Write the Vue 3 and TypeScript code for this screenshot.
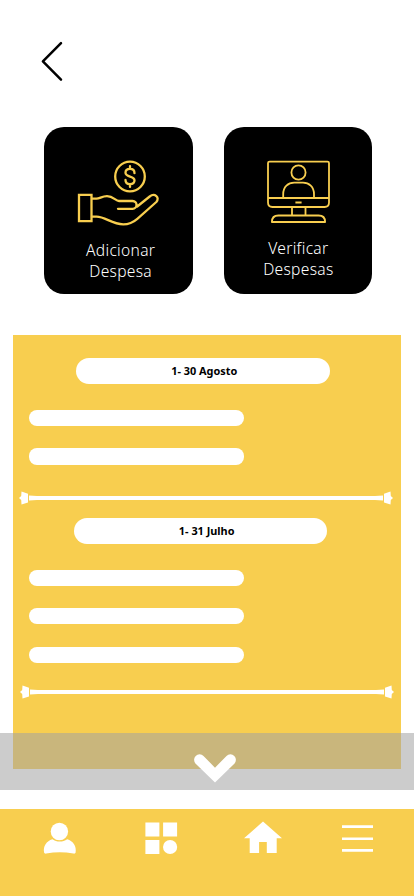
<script setup lang="ts">
interface Period {
  id: string
  label: string
  entries: number
}

const periods: Period[] = [
  { id: 'agosto', label: '1- 30 Agosto', entries: 2 },
  { id: 'julho', label: '1- 31 Julho', entries: 3 },
]
</script>

<template>
  <main class="screen">
    <header class="top">
      <button class="back" aria-label="Voltar">
        <svg width="26" height="42" viewBox="0 0 26 42">
          <path d="M21 2.200 2.900 20.400 21 38.600" fill="none" stroke="#000" stroke-width="2.500" stroke-linecap="round" stroke-linejoin="round" />
        </svg>
      </button>
    </header>

    <section class="actions">
      <button class="card add">
        <svg class="art" width="148" height="110" viewBox="45 127 148 110" fill="none" stroke="#f8ce4f" stroke-width="2.300" stroke-linecap="round" stroke-linejoin="round">
          <circle cx="130" cy="176.500" r="14.800" />
          <path d="M134.500 173.200c0-2.800-1.800-4.300-4.500-4.300s-4.500 1.500-4.500 3.900c0 4.800 9 2.700 9 7.500 0 2.400-1.800 3.900-4.500 3.900s-4.500-1.500-4.500-4.200M130 166.200v2.500M130 184.400v2.500" />
          <path d="M79 194.900h12.500v26.200H79z" stroke-linejoin="miter" />
          <path d="M92 198.700h4.500c3.200 0 5.500-2.500 10.500-2.500 6.500 0 8.500 4.800 12 4.800h13.500c5.500 0 5.200 7.800 0 7.800h-14.500M137.200 206.500l12.500-10c4.900-3.900 10.600.8 6.600 5.500l-19 16.800c-4.500 3.900-8.500 5.500-14 5.500-11.500 0-17.800-7.600-26.800-7.600H92" />
        </svg>
        <span class="caption">Adicionar<br />Despesa</span>
      </button>
      <button class="card check">
        <svg class="art" width="148" height="110" viewBox="223.800 127.200 148 110" fill="none" stroke="#f8ce4f" stroke-width="1.800" stroke-linejoin="round">
          <path d="M269.400 161.800h57.900q1.500 0 1.500 1.500v39.500q0 4.400-4.400 4.400h-52.200q-4.400 0-4.400-4.400v-39.500q0-1.500 1.600-1.500zM268 198.200h60.800M291.800 207.200v8.500M305.300 207.200v8.500M295.200 202.700h6.200" />
          <circle cx="298.300" cy="172.700" r="7.100" />
          <path d="M283 198v-3.500c0-7.500 5-11.600 11-11.600h8.800c6 0 11 4.100 11 11.600v3.500M271.700 222.200c0-4.200 2.500-6.500 6.500-6.500h40.200c4 0 6.500 2.300 6.500 6.500z" />
        </svg>
        <span class="caption">Verificar<br />Despesas</span>
      </button>
    </section>

    <section class="panel">
      <article v-for="period in periods" :key="period.id" class="period" :class="period.id">
        <h2 class="pill">{{ period.label }}</h2>
        <div class="entries">
          <div v-for="n in period.entries" :key="n" class="entry"></div>
        </div>
        <svg class="divider" width="374" height="14" viewBox="0 0 374 14" fill="#fff">
          <path d="M0 7 2.200 5 2.500.6 9 2.800v8.600L2.500 13.500 2.200 9z" />
          <path d="M10 4.600 18 5.100h338l8-.5v4.900l-8-.5H18l-8 .5z" />
          <path d="M374 7 371.800 5 371.500.6 365 2.800v8.600l6.500 2.100.3-4.500z" />
        </svg>
      </article>
    </section>

    <button class="more" aria-label="Ver mais">
      <svg width="42" height="30" viewBox="0 0 42 30" fill="#fff">
        <path d="M1.700 9.700a5.500 5.500 0 0 1 7.800-7.800L21 13.700 32.500 1.900a5.500 5.500 0 0 1 7.800 7.800L21 28.500z" />
      </svg>
    </button>

    <nav class="tabs">
      <svg width="34" height="34" viewBox="0 0 34 34" fill="#fff">
        <circle cx="16.400" cy="9.500" r="8.700" />
        <path d="M9.400 17.200c4.300 3.100 10.500 3.100 14.800 0 6 1.700 9.500 7 8.400 13.400-.2 1-1.200 1.200-2.200 1-9.200-1.800-18-1.800-27.200 0-1 .2-1.900 0-2.100-1-1.200-6.400 2.400-11.700 8.300-13.400z" />
      </svg>
      <svg width="34" height="34" viewBox="0 0 34 34" fill="#fff">
        <path d="M1.400.5h14v14h-14zM19.100.5h14v14h-14zM1.400 18h14v14h-14z" />
        <circle cx="26.100" cy="25" r="7.100" />
      </svg>
      <svg width="40" height="34" viewBox="0 0 40 34" fill="#fff">
        <path d="M20-.4 39 16.200h-5.300V31h-9.900V20h-7.700v11H6.700V16.200H1z" />
      </svg>
      <svg width="34" height="34" viewBox="0 0 34 34" fill="#fff">
        <path d="M1 3.200h31v2.700H1zM1 15.400h31v2.700H1zM1 27h31v2.700H1z" />
      </svg>
    </nav>
  </main>
</template>

<style>
body {
  margin: 0;
  background: #fff;
}
</style>

<style scoped>
.screen {
  position: relative;
  box-sizing: border-box;
  width: 414px;
  height: 896px;
  overflow: hidden;
  display: flex;
  flex-direction: column;
  background: #fff;
  font-family: 'Noto Sans', 'Open Sans', sans-serif;
}

button {
  border: 0;
  padding: 0;
  background: none;
  font: inherit;
}

svg {
  display: block;
  flex: none;
  overflow: visible;
}

.top {
  height: 86px;
  padding: 41px 0 0 40px;
  box-sizing: border-box;
}

.back {
  display: block;
}

.actions {
  display: flex;
  align-items: flex-start;
  gap: 31.500px;
  margin-top: 40.700px;
  padding-left: 44.300px;
  height: 208px;
  flex: none;
}

.card {
  display: flex;
  flex-direction: column;
  align-items: center;
  width: 148.700px;
  height: 167.500px;
  border-radius: 20px;
  background: #000;
  color: #fff;
}

.check {
  width: 147.800px;
  height: 167px;
}

.art {
  margin-bottom: 3px;
}

.caption {
  font-size: 15.600px;
  font-weight: 350;
  line-height: 21px;
  letter-spacing: 0.300px;
  text-align: center;
  padding-left: 4px;
}

.check .caption {
  margin-top: -2px;
  padding-left: 0;
}

.panel {
  box-sizing: border-box;
  width: 388.600px;
  height: 434.300px;
  flex: none;
  margin-left: 12.700px;
  padding: 23.300px 0 0 16.300px;
  background: #f8ce4f;
}

.period {
  display: flex;
  flex-direction: column;
}

.julho {
  margin-top: 13.300px;
}

.pill {
  width: 253.500px;
  height: 26px;
  box-sizing: border-box;
  margin: 0 0 0 47.500px;
  padding-left: 2px;
  border-radius: 13px;
  background: #fff;
  color: #000;
  text-align: center;
  font-size: 10.900px;
  font-weight: 700;
  line-height: 26px;
}

.julho .pill {
  margin-left: 44.700px;
  padding-left: 12.500px;
}

.entries {
  display: flex;
  flex-direction: column;
  gap: 22.200px;
  margin: 26px 0;
}

.entry {
  width: 215px;
  height: 16.200px;
  border-radius: 8px;
  background: #fff;
}

.divider {
  margin-left: -10px;
}

.julho .divider {
  margin: -3.900px 0 0 -8.500px;
}

.more {
  position: absolute;
  left: 0;
  top: 733px;
  width: 414px;
  height: 57.400px;
  display: flex;
  justify-content: center;
  padding: 21px 0 0 16px;
  box-sizing: border-box;
  background: rgba(161, 161, 161, 0.545);
}

.tabs {
  display: grid;
  grid-template-columns: 100.700px 99.200px 97.800px 34px;
  align-items: start;
  box-sizing: border-box;
  height: 87px;
  margin-top: auto;
  padding: 13px 0 0 43.300px;
  background: #f8ce4f;
}
</style>
